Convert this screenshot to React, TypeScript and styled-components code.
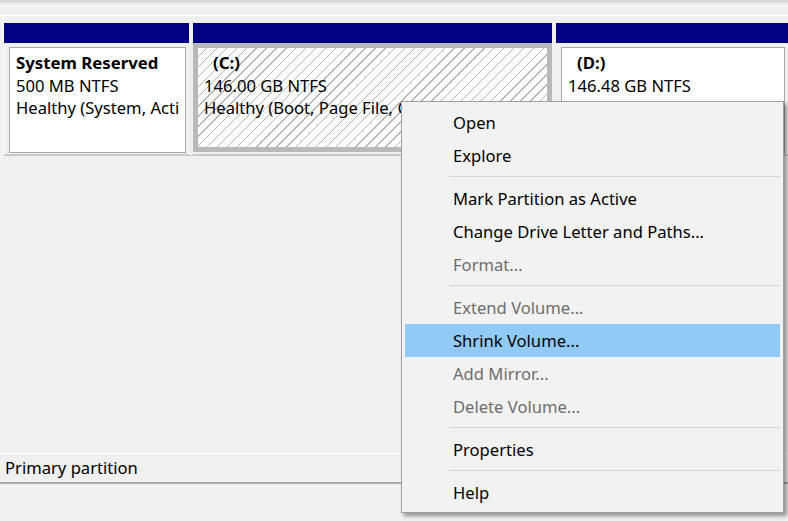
import React from "react";
import styled, { createGlobalStyle } from "styled-components";

const FONT = `"Segoe UI", "Noto Sans", "Liberation Sans", sans-serif`;

const GlobalStyle = createGlobalStyle`
  html, body {
    margin: 0;
    padding: 0;
    background: #f0f0f0;
    font-family: ${FONT};
    color: #000;
  }
`;

interface PartitionData {
  width?: number;
  selected?: boolean;
  title: string;
  size: string;
  status: string;
}

const partitions: PartitionData[] = [
  {
    width: 185,
    title: "System Reserved",
    size: "500 MB NTFS",
    status: "Healthy (System, Active, Primary Partition)",
  },
  {
    width: 359,
    selected: true,
    title: "(C:)",
    size: "146.00 GB NTFS",
    status: "Healthy (Boot, Page File, Crash Dump, Primary Partition)",
  },
  {
    title: "(D:)",
    size: "146.48 GB NTFS",
    status: "Healthy (Primary Partition)",
  },
];

type MenuEntry =
  | { kind: "item"; label: string; disabled?: boolean; active?: boolean }
  | { kind: "sep" };

const menu: MenuEntry[] = [
  { kind: "item", label: "Open" },
  { kind: "item", label: "Explore" },
  { kind: "sep" },
  { kind: "item", label: "Mark Partition as Active" },
  { kind: "item", label: "Change Drive Letter and Paths..." },
  { kind: "item", label: "Format...", disabled: true },
  { kind: "sep" },
  { kind: "item", label: "Extend Volume...", disabled: true },
  { kind: "item", label: "Shrink Volume...", active: true },
  { kind: "item", label: "Add Mirror...", disabled: true },
  { kind: "item", label: "Delete Volume...", disabled: true },
  { kind: "sep" },
  { kind: "item", label: "Properties" },
  { kind: "sep" },
  { kind: "item", label: "Help" },
];

export default function App() {
  return (
    <>
      <GlobalStyle />
      <Window>
        <TopStrip />
        <DiskRow>
          {partitions.map((p) => (
            <PartitionCol key={p.title} $width={p.width}>
              <PartitionHeader />
              <PartitionBody $selected={p.selected}>
                <PartitionBox $selected={p.selected}>
                  <BoxLine $bold $indent={p.title.startsWith("(")}>
                    {p.title}
                  </BoxLine>
                  <BoxLine>{p.size}</BoxLine>
                  <BoxLine>{p.status}</BoxLine>
                </PartitionBox>
              </PartitionBody>
            </PartitionCol>
          ))}
        </DiskRow>
        <EmptyArea />
        <StatusBar>Primary partition</StatusBar>
        <BottomArea />

        <ContextMenu>
          {menu.map((m, i) =>
            m.kind === "sep" ? (
              <Separator key={i} />
            ) : (
              <MenuItem key={i} $disabled={m.disabled} $active={m.active}>
                {m.label}
              </MenuItem>
            )
          )}
        </ContextMenu>
      </Window>
    </>
  );
}

const Window = styled.div`
  position: relative;
  width: 788px;
  height: 521px;
  overflow: hidden;
  display: flex;
  flex-direction: column;
  background: #f0f0f0;
`;

const TopStrip = styled.div`
  height: 12px;
  border-top: 3px solid #dadada;
  border-bottom: 1px solid #ffffff;
  box-shadow: inset 0 3px 0 #f0f0f0, inset 0 4px 0 #ffffff;
`;

const DiskRow = styled.div`
  display: flex;
  gap: 4px;
  padding-top: 7px;
  margin-left: 3px;
  height: 132px;
  border-bottom: 1px solid #c8c8c8;
  border-left: 1px solid #ffffff;
`;

const PartitionCol = styled.div<{ $width?: number }>`
  display: flex;
  flex-direction: column;
  flex: ${(p) => (p.$width ? `0 0 ${p.$width}px` : "1 1 auto")};
  min-width: 0;
`;

const PartitionHeader = styled.div`
  height: 20px;
  background: #000080;
`;

const PartitionBody = styled.div<{ $selected?: boolean }>`
  flex: 1;
  display: flex;
  min-height: 0;
  padding: ${(p) => (p.$selected ? "0 0 3px 0" : "4px 3px 2px 5px")};
  background: #f0f0f0;
  box-shadow: inset 0 -1px 0 #c8c8c8;
`;

const PartitionBox = styled.div<{ $selected?: boolean }>`
  flex: 1;
  min-width: 0;
  overflow: hidden;
  box-sizing: border-box;
  padding: 4px 6px 0;
  border: ${(p) => (p.$selected ? "5px solid #b9b9b9" : "1px solid #a9a9a9")};
  background: ${(p) =>
    p.$selected
      ? "repeating-linear-gradient(135deg, #ffffff 0px, #ffffff 6px, #b4b4b4 6px, #b4b4b4 7px)"
      : "#ffffff"};
`;

const BoxLine = styled.div<{ $bold?: boolean; $indent?: boolean }>`
  font-size: ${(p) => (p.$bold ? "16.8px" : "16.6px")};
  line-height: 22.5px;
  white-space: nowrap;
  overflow: hidden;
  font-weight: ${(p) => (p.$bold ? 700 : 400)};
  padding-left: ${(p) => (p.$indent ? "9px" : "0")};
`;

const EmptyArea = styled.div`
  flex: 1;
`;

const StatusBar = styled.div`
  height: 28px;
  line-height: 28px;
  padding-left: 5px;
  font-size: 16.6px;
  border-top: 1px solid #ffffff;
  border-bottom: 2px solid #acacac;
`;

const BottomArea = styled.div`
  height: 34px;
  border-top: 1px solid #fafafa;
  margin-top: 2px;
`;

const ContextMenu = styled.div`
  position: absolute;
  left: 401px;
  top: 101px;
  width: 377px;
  padding: 4px 2px 3px 2px;
  background: #f2f2f2;
  border: 1px solid #a0a0a0;
  box-shadow: 3px 3px 4px rgba(0, 0, 0, 0.4);
  display: flex;
  flex-direction: column;
`;

const MenuItem = styled.div<{ $disabled?: boolean; $active?: boolean }>`
  height: 33px;
  line-height: 33px;
  margin: 0 1px;
  padding-left: 48px;
  font-size: 16.6px;
  white-space: nowrap;
  color: ${(p) => (p.$disabled ? "#6d6d6d" : "#000")};
  background: ${(p) => (p.$active ? "#91c9f7" : "transparent")};
`;

const Separator = styled.div`
  height: 1px;
  margin: 4px 1px 5px 45px;
  background: #d7d7d7;
`;
